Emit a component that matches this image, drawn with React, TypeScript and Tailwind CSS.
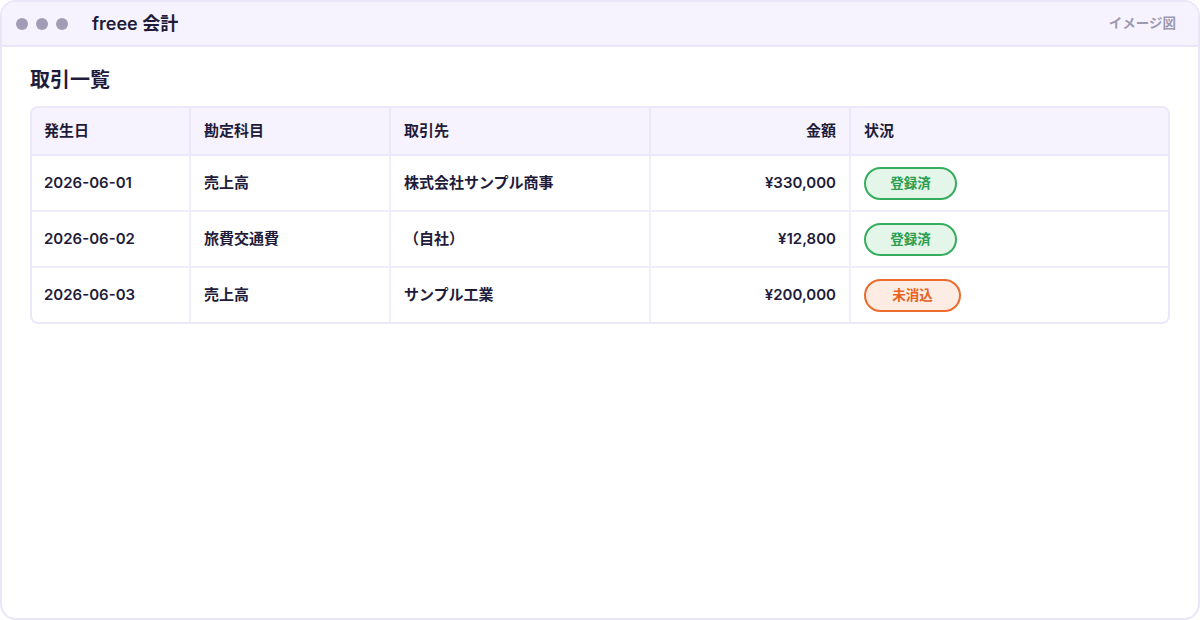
const rows = [
  { date: "2026-06-01", account: "売上高", partner: "株式会社サンプル商事", amount: "¥330,000", status: "done" },
  { date: "2026-06-02", account: "旅費交通費", partner: "（自社）", amount: "¥12,800", status: "done" },
  { date: "2026-06-03", account: "売上高", partner: "サンプル工業", amount: "¥200,000", status: "open" },
];

const StatusBadge = ({ status }: { status: string }) =>
  status === "done" ? (
    <span className="inline-flex h-[33px] w-[93px] items-center justify-center rounded-full border-2 border-[#34ad5c] bg-[#e4f5e9] text-[13.5px] font-bold text-[#2a9f50]">
      登録済
    </span>
  ) : (
    <span className="inline-flex h-[33px] w-[97px] items-center justify-center rounded-full border-2 border-[#ec6b2d] bg-[#fdece3] text-[13.5px] font-bold text-[#e8611f]">
      未消込
    </span>
  );

export default function App() {
  return (
    <div
      className="h-[620px] w-[1200px] bg-white"
      style={{ fontFamily: '"Inter", "Noto Sans CJK JP", sans-serif' }}
    >
      <div className="flex h-full flex-col overflow-hidden rounded-2xl border-2 border-[#e9e6f8]">
        {/* title bar */}
        <div className="flex h-[45px] shrink-0 items-center border-b-2 border-[#e9e6f8] bg-[#f6f3fe] pl-[14px] pr-[22px]">
          <div className="flex gap-2">
            <span className="h-3 w-3 rounded-full bg-[#a19db6]" />
            <span className="h-3 w-3 rounded-full bg-[#a19db6]" />
            <span className="h-3 w-3 rounded-full bg-[#a19db6]" />
          </div>
          <span className="ml-[24px] text-[18px] font-semibold text-[#1f1c3b]">freee 会計</span>
          <span className="ml-auto text-[13.5px] font-semibold text-[#9d99b0]">イメージ図</span>
        </div>

        {/* body */}
        <div className="px-[28px] pt-[19px]">
          <h1 className="text-[20px] font-bold leading-[28px] text-[#1f1c3b]">取引一覧</h1>
          <div className="mt-[12px] overflow-hidden rounded-lg border-2 border-[#ebe8f9]">
            <table className="w-full table-fixed border-collapse text-[15px] font-semibold text-[#1f1c3b]">
              <colgroup>
                <col className="w-[158px]" />
                <col className="w-[200px]" />
                <col className="w-[260px]" />
                <col className="w-[200px]" />
                <col />
              </colgroup>
              <thead>
                <tr className="h-[47px] border-b-2 border-[#ebe8f9] bg-[#f6f3fe]">
                  <th className="border-r-2 border-[#ebe8f9] pl-[12px] text-left font-semibold">発生日</th>
                  <th className="border-r-2 border-[#ebe8f9] pl-[13px] text-left font-semibold">勘定科目</th>
                  <th className="border-r-2 border-[#ebe8f9] pl-[13px] text-left font-semibold">取引先</th>
                  <th className="border-r-2 border-[#ebe8f9] pr-[13px] text-right font-semibold">金額</th>
                  <th className="pl-[13px] text-left font-semibold">状況</th>
                </tr>
              </thead>
              <tbody>
                {rows.map((r, i) => (
                  <tr
                    key={r.date}
                    className={i < rows.length - 1 ? "h-[56px] border-b-2 border-[#f0eefb]" : "h-[55px]"}
                  >
                    <td className="border-r-2 border-[#f0eefb] pl-[12px]">{r.date}</td>
                    <td className="border-r-2 border-[#f0eefb] pl-[13px]">{r.account}</td>
                    <td className="border-r-2 border-[#f0eefb] pl-[13px]">{r.partner}</td>
                    <td className="border-r-2 border-[#f0eefb] pr-[13px] text-right">{r.amount}</td>
                    <td className="pl-[13px]">
                      <StatusBadge status={r.status} />
                    </td>
                  </tr>
                ))}
              </tbody>
            </table>
          </div>
        </div>
      </div>
    </div>
  );
}
